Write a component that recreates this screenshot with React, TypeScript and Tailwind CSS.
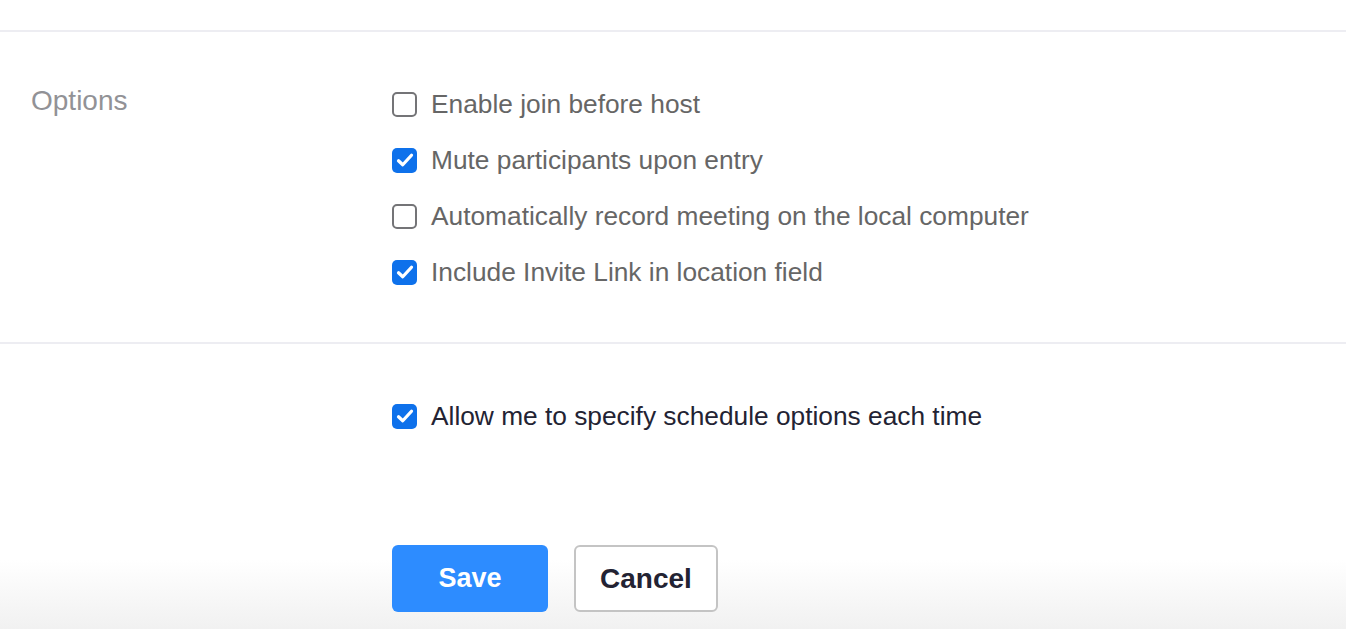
import React, { useState } from 'react';

const Checkbox: React.FC<{ checked: boolean; onChange: () => void }> = ({ checked, onChange }) => (
  <button
    type="button"
    onClick={onChange}
    className={
      checked
        ? 'w-[25px] h-[25px] rounded-[5px] bg-[#0e71eb] flex items-center justify-center shrink-0'
        : 'w-[25px] h-[25px] rounded-[5px] border-2 border-[#747477] bg-white shrink-0'
    }
  >
    {checked && (
      <svg width="20" height="20" viewBox="0 0 16 16" fill="none">
        <path d="M2.8 8.6 L6.2 11.8 L13.2 4.2" stroke="white" strokeWidth="2.6" strokeLinecap="round" strokeLinejoin="round" />
      </svg>
    )}
  </button>
);

const App: React.FC = () => {
  const [opts, setOpts] = useState([
    { label: 'Enable join before host', checked: false },
    { label: 'Mute participants upon entry', checked: true },
    { label: 'Automatically record meeting on the local computer', checked: false },
    { label: 'Include Invite Link in location field', checked: true },
  ]);
  const [allow, setAllow] = useState(true);

  const toggle = (i: number) =>
    setOpts(opts.map((o, j) => (j === i ? { ...o, checked: !o.checked } : o)));

  return (
    <div className="w-[1346px] h-[629px] overflow-hidden bg-white flex flex-col font-['Liberation_Sans',Arial,sans-serif]">
      <div className="h-[30px] shrink-0" />
      <div className="border-t-2 border-[#ededf2] flex pt-[57px] pb-[55px]">
        <div className="w-[392px] pl-[31px] text-[28px] leading-[30px] text-[#929296] -mt-[3px]">Options</div>
        <div className="flex flex-col gap-[26px]">
          {opts.map((o, i) => (
            <label key={i} className="flex items-center gap-[14px] h-[30px] cursor-pointer">
              <Checkbox checked={o.checked} onChange={() => toggle(i)} />
              <span className="text-[26.3px] leading-[30px] text-[#666666]">{o.label}</span>
            </label>
          ))}
        </div>
      </div>
      <div className="border-t-2 border-[#ededf2] pt-[57px] pl-[392px]">
        <label className="flex items-center gap-[14px] h-[30px] cursor-pointer">
          <Checkbox checked={allow} onChange={() => setAllow(!allow)} />
          <span className="text-[26.3px] leading-[30px] text-[#232333]">Allow me to specify schedule options each time</span>
        </label>
      </div>
      <div className="mt-[114px] flex-1 bg-gradient-to-b from-white from-[18%] to-[#f1f1f1] pl-[392px]">
        <div className="flex gap-[26px]">
          <button className="w-[156px] h-[67px] rounded-[6px] bg-[#2d8cff] text-white text-[27px] font-bold">Save</button>
          <button className="w-[144px] h-[67px] rounded-[6px] border-2 border-[#c4c4c4] bg-white text-[#232333] text-[28px] font-bold">Cancel</button>
        </div>
      </div>
    </div>
  );
};

export default App;
